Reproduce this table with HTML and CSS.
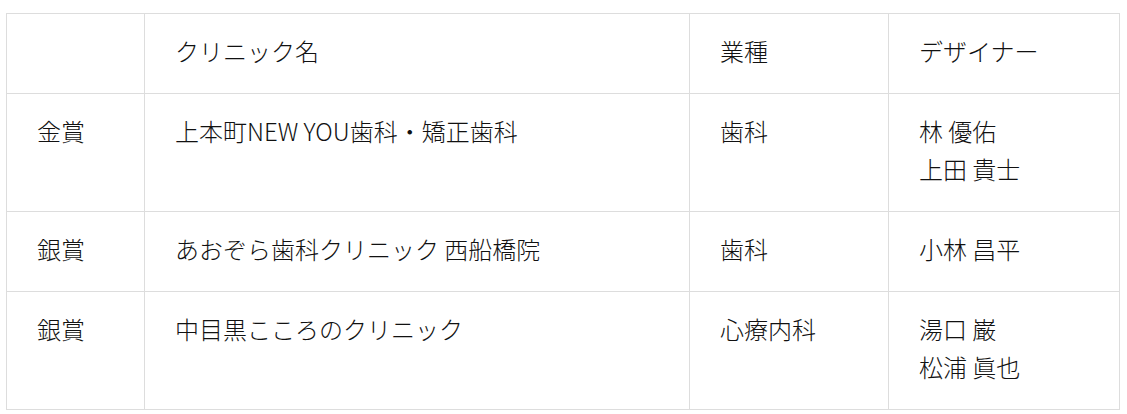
FILE: index.html
```html
<!DOCTYPE html>
<html lang="ja">
<head>
<meta charset="utf-8">
<link rel="stylesheet" href="styles.css">
</head>
<body>
<div class="wrap">
<table class="awards">
<colgroup>
<col class="c1"><col class="c2"><col class="c3"><col class="c4">
</colgroup>
<thead>
<tr><th></th><th>クリニック名</th><th>業種</th><th>デザイナー</th></tr>
</thead>
<tbody>
<tr><td>金賞</td><td>上本町NEW YOU歯科・矯正歯科</td><td>歯科</td><td>林 優佑<br>上田 貴士</td></tr>
<tr><td>銀賞</td><td>あおぞら歯科クリニック 西船橋院</td><td>歯科</td><td>小林 昌平</td></tr>
<tr><td>銀賞</td><td>中目黒こころのクリニック</td><td>心療内科</td><td>湯口 巌<br>松浦 眞也</td></tr>
</tbody>
</table>
</div>
</body>
</html>
```
FILE: styles.css
```css
html, body {
  margin: 0;
  background: #fff;
}
.wrap {
  padding: 13px 8px 0 6px;
}
.awards {
  border-collapse: collapse;
  table-layout: fixed;
  width: 1113px;
  font-family: "Noto Sans CJK JP", "Noto Sans", sans-serif;
  font-size: 24px;
  font-weight: 300;
  line-height: 38px;
  color: #111;
}
.c1 { width: 138px; }
.c2 { width: 545px; }
.c3 { width: 199px; }
.c4 { width: 231px; }
.awards th,
.awards td {
  border: 1px solid #ddd;
  padding: 18px 0 23px 30px;
  text-align: left;
  vertical-align: top;
  font-weight: 300;
}
```
